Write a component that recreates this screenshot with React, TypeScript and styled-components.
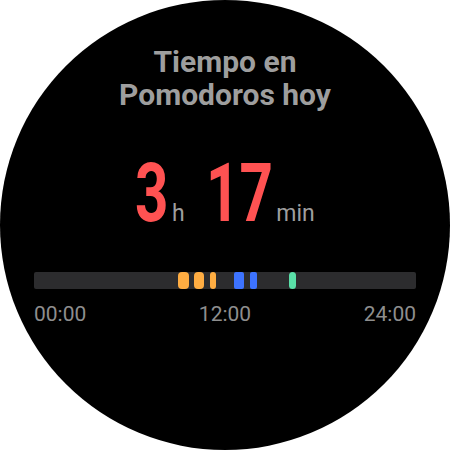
import React from 'react';
import styled, { createGlobalStyle } from 'styled-components';

const GlobalStyle = createGlobalStyle`
  html, body {
    margin: 0;
    padding: 0;
    background: #ffffff;
  }
  body {
    font-family: Roboto, "Noto Sans", sans-serif;
  }
`;

type Session = { start: number; width: number; kind: 'focus' | 'deep' | 'rest' };

// start offset (px along the day bar) and width of each block
const sessions: Session[] = [
  { start: 144, width: 11, kind: 'focus' },
  { start: 160, width: 10, kind: 'focus' },
  { start: 175.5, width: 6, kind: 'focus' },
  { start: 200, width: 10, kind: 'deep' },
  { start: 216, width: 7, kind: 'deep' },
  { start: 255, width: 7, kind: 'rest' },
];

const BAR_WIDTH = 382;

const colors = {
  focus: '#ffad42',
  deep: '#3d73ff',
  rest: '#5ae0a8',
};

const App = () => {
  return (
    <>
      <GlobalStyle />
      <Watch>
        <Title>
          Tiempo en
          <br />
          Pomodoros hoy
        </Title>
        <Total>
          <Big $chars={1}>3</Big>
          <Unit>h</Unit>
          <Big $chars={2} $lead>
            17
          </Big>
          <Unit>min</Unit>
        </Total>
        <Timeline>
          {sessions.map((s, i) => (
            <Block
              key={i}
              $kind={s.kind}
              style={{
                left: `${(s.start / BAR_WIDTH) * 100}%`,
                width: `${s.width}px`,
              }}
            />
          ))}
        </Timeline>
        <Labels>
          <Label>00:00</Label>
          <Label>12:00</Label>
          <Label>24:00</Label>
        </Labels>
      </Watch>
    </>
  );
};

export default App;

const Watch = styled.div`
  width: 450px;
  height: 450px;
  border-radius: 50%;
  background: #000000;
  display: flex;
  flex-direction: column;
  align-items: center;
  box-sizing: border-box;
  padding-top: 45px;
  overflow: hidden;
`;

const Title = styled.div`
  font-size: 30px;
  line-height: 33px;
  font-weight: 700;
  color: #9e9e9e;
  text-align: center;
`;

const Total = styled.div`
  display: flex;
  align-items: baseline;
  margin-top: 40px;
  height: 86px;
  line-height: 86px;
`;

const Big = styled.span<{ $chars: number; $lead?: boolean }>`
  display: inline-block;
  font-size: 81px;
  font-weight: 700;
  color: #ff5252;
  transform: scaleX(0.72);
  transform-origin: left center;
  margin-right: ${(p) => -0.157 * p.$chars}em;
  margin-left: ${(p) => (p.$lead ? '21px' : '0')};
`;

const Unit = styled.span`
  font-size: 23px;
  color: #9e9e9e;
  margin-left: 3px;
`;

const Timeline = styled.div`
  position: relative;
  width: ${BAR_WIDTH}px;
  height: 17px;
  margin-top: 35px;
  border-radius: 2px;
  background: #2c2c2e;
`;

const Block = styled.div<{ $kind: Session['kind'] }>`
  position: absolute;
  top: 0;
  bottom: 0;
  border-radius: ${(p) => (p.$kind === 'deep' ? '2px' : '4px')};
  background: ${(p) => colors[p.$kind]};
`;

const Labels = styled.div`
  width: ${BAR_WIDTH}px;
  display: flex;
  justify-content: space-between;
  margin-top: 13px;
`;

const Label = styled.span`
  font-size: 21px;
  line-height: 24px;
  color: #8e8e8e;
`;
